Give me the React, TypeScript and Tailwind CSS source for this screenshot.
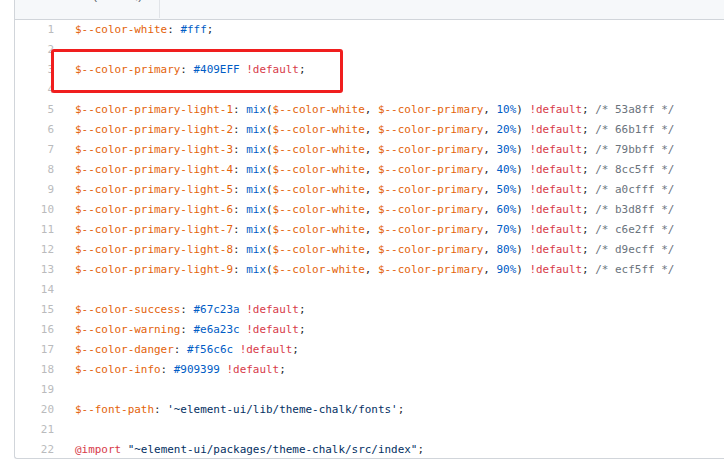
import React from 'react'

type Tok = [string, string]

const O = 'text-[#e36209]'
const B = 'text-[#005cc5]'
const R = 'text-[#d73a49]'
const D = 'text-[#24292e]'
const C = 'text-[#6a737d]'
const S = 'text-[#032f62]'

const hexes = ['53a8ff', '66b1ff', '79bbff', '8cc5ff', 'a0cfff', 'b3d8ff', 'c6e2ff', 'd9ecff', 'ecf5ff']

const lightLine = (i: number): Tok[] => [
  [O, `$--color-primary-light-${i + 1}`],
  [D, ': '],
  [B, 'mix'],
  [D, '('],
  [O, '$--color-white'],
  [D, ', '],
  [O, '$--color-primary'],
  [D, ', '],
  [B, `${(i + 1) * 10}%`],
  [D, ') '],
  [R, '!default'],
  [D, '; '],
  [C, `/* ${hexes[i]} */`],
]

const simple = (name: string, val: string): Tok[] => [
  [O, name],
  [D, ': '],
  [B, val],
  [D, ' '],
  [R, '!default'],
  [D, ';'],
]

const lines: Tok[][] = [
  [[O, '$--color-white'], [D, ': '], [B, '#fff'], [D, ';']],
  [],
  simple('$--color-primary', '#409EFF'),
  [],
  ...hexes.map((_, i) => lightLine(i)),
  [],
  simple('$--color-success', '#67c23a'),
  simple('$--color-warning', '#e6a23c'),
  simple('$--color-danger', '#f56c6c'),
  simple('$--color-info', '#909399'),
  [],
  [[O, '$--font-path'], [D, ': '], [S, "'~element-ui/lib/theme-chalk/fonts'"], [D, ';']],
  [],
  [[R, '@import'], [D, ' '], [S, '"~element-ui/packages/theme-chalk/src/index"'], [D, ';']],
]

export default function App() {
  return (
    <div className="relative w-[724px] h-[470px] overflow-hidden bg-white">
      <div className="ml-[14px] w-[720px] border-l border-b border-[#d1d5da] rounded-bl-[3px]">
        {/* file header, mostly scrolled out of view */}
        <div className="flex h-[20px] bg-[#f6f8fa] border-b border-[#d1d5da] overflow-hidden">
          <div className="w-[144px] pl-[78px] -mt-[14px] text-[12px] leading-[18px] text-[#586069] font-['Liberation_Sans',sans-serif] whitespace-nowrap">
            (22 sloc,)
          </div>
          <div className="h-[18px] border-l border-[#e1e4e8]" />
          <div className="ml-auto -mt-[4px] mr-[-10px] w-[13px] h-[14px] border-r border-b border-[#d1d5da] rounded-br-[3px]" />
        </div>

        <div className="h-[438px] font-['DejaVu_Sans_Mono',monospace] text-[10.95px]">
          {lines.map((toks, i) => (
            <div key={i} className="flex h-[20px] items-center leading-[20px] whitespace-pre">
              <div className="w-[39px] text-right text-[#babbbd]">{i + 1}</div>
              <div className="pl-[21px]">
                {toks.map(([cls, t], j) => (
                  <span key={j} className={cls}>{t}</span>
                ))}
              </div>
            </div>
          ))}
        </div>
      </div>

      {/* highlight box */}
      <div className="absolute left-[51px] top-[49px] w-[292px] h-[44px] border-[3px] border-[#f01e1e] rounded-[3px]" />
    </div>
  )
}
